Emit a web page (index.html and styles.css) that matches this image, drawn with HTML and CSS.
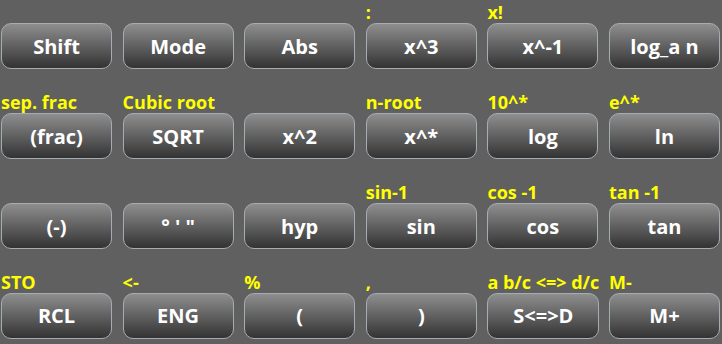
FILE: index.html
```html
<!DOCTYPE html>
<html lang="en">
<head>
  <meta charset="UTF-8" />
  <meta name="viewport" content="width=device-width, initial-scale=1.0"/>
  <title>Calculator Keys</title>
  <link rel="stylesheet" href="styles.css">
</head>
<body>
  <div class="keys">
    <div class="key"><span class="alt"></span><button>Shift</button></div>
    <div class="key"><span class="alt"></span><button>Mode</button></div>
    <div class="key"><span class="alt"></span><button>Abs</button></div>
    <div class="key"><span class="alt">:</span><button>x^3</button></div>
    <div class="key"><span class="alt">x!</span><button>x^-1</button></div>
    <div class="key"><span class="alt"></span><button>log_a n</button></div>

    <div class="key"><span class="alt">sep. frac</span><button>(frac)</button></div>
    <div class="key"><span class="alt">Cubic root</span><button>SQRT</button></div>
    <div class="key"><span class="alt"></span><button>x^2</button></div>
    <div class="key"><span class="alt">n-root</span><button>x^*</button></div>
    <div class="key"><span class="alt">10^*</span><button>log</button></div>
    <div class="key"><span class="alt">e^*</span><button>ln</button></div>

    <div class="key"><span class="alt"></span><button>(-)</button></div>
    <div class="key"><span class="alt"></span><button>&deg; ' "</button></div>
    <div class="key"><span class="alt"></span><button>hyp</button></div>
    <div class="key"><span class="alt">sin-1</span><button>sin</button></div>
    <div class="key"><span class="alt">cos -1</span><button>cos</button></div>
    <div class="key"><span class="alt">tan -1</span><button>tan</button></div>

    <div class="key"><span class="alt">STO</span><button>RCL</button></div>
    <div class="key"><span class="alt">&lt;-</span><button>ENG</button></div>
    <div class="key"><span class="alt">%</span><button>(</button></div>
    <div class="key"><span class="alt">,</span><button>)</button></div>
    <div class="key"><span class="alt">a b/c &lt;=&gt; d/c</span><button>S&lt;=&gt;D</button></div>
    <div class="key"><span class="alt">M-</span><button>M+</button></div>
  </div>
</body>
</html>
```

FILE: styles.css
```css
html, body { margin:0; padding:0; background:#606060; }
body { font-family:"Open Sans", "DejaVu Sans", sans-serif; font-weight:700; overflow:hidden; }
.keys { display:grid; grid-template-columns:repeat(6, 111px); grid-auto-rows:69.4px; column-gap:10.6px; row-gap:20.6px; padding-left:1px; }
.key { display:grid; grid-template-rows:22.7px 46.7px; }
.alt { align-self:end; color:#ffff00; font-size:18px; line-height:18px; padding-bottom:2px; white-space:nowrap; }
.key button {
  font:inherit; font-size:20px; color:#fff;
  border:1px solid #a4acb4; border-radius:10px;
  background:linear-gradient(#8e8e8e, #333333);
  padding:0; margin:0; cursor:pointer;
}
```
